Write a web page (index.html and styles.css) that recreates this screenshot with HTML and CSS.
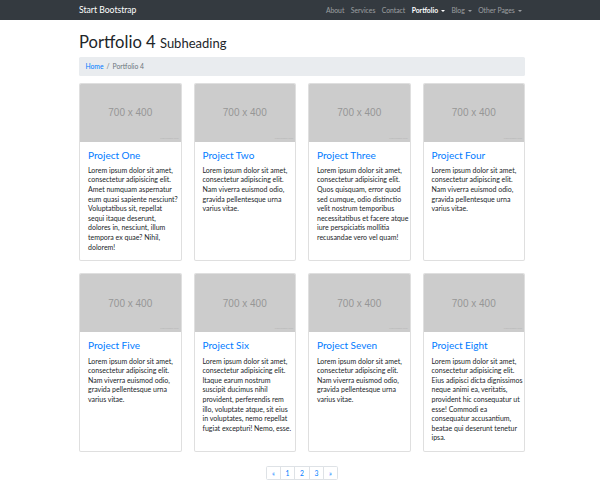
FILE: index.html
```html
<!DOCTYPE html>
<html lang="en">
<head>
<meta charset="utf-8">
<title>Portfolio 4 - Start Bootstrap</title>
<link rel="stylesheet" href="styles.css">
</head>
<body>
<nav class="navbar">
  <div class="container nav-inner">
    <a class="brand" href="#">Start Bootstrap</a>
    <ul class="nav-links">
      <li><a href="#">About</a></li>
      <li><a href="#">Services</a></li>
      <li><a href="#">Contact</a></li>
      <li><a class="active dropdown" href="#">Portfolio</a></li>
      <li><a class="dropdown" href="#">Blog</a></li>
      <li><a class="dropdown" href="#">Other Pages</a></li>
    </ul>
  </div>
</nav>

<main class="container">
  <h1 class="page-title">Portfolio 4 <small>Subheading</small></h1>
  <ol class="breadcrumb">
    <li><a href="#">Home</a></li>
    <li class="crumb-active">Portfolio 4</li>
  </ol>

  <div class="grid">
    <div class="card">
      <div class="ph"><span>700 x 400</span><i>placeholder.com</i></div>
      <div class="card-body">
        <h4 class="card-title"><a href="#">Project One</a></h4>
        <p>Lorem ipsum dolor sit amet,<br>consectetur adipisicing elit.<br>Amet numquam aspernatur<br>eum quasi sapiente nesciunt?<br>Voluptatibus sit, repellat<br>sequi itaque deserunt,<br>dolores in, nesciunt, illum<br>tempora ex quae? Nihil,<br>dolorem!</p>
      </div>
    </div>
    <div class="card">
      <div class="ph"><span>700 x 400</span><i>placeholder.com</i></div>
      <div class="card-body">
        <h4 class="card-title"><a href="#">Project Two</a></h4>
        <p>Lorem ipsum dolor sit amet,<br>consectetur adipiscing elit.<br>Nam viverra euismod odio,<br>gravida pellentesque urna<br>varius vitae.</p>
      </div>
    </div>
    <div class="card">
      <div class="ph"><span>700 x 400</span><i>placeholder.com</i></div>
      <div class="card-body">
        <h4 class="card-title"><a href="#">Project Three</a></h4>
        <p>Lorem ipsum dolor sit amet,<br>consectetur adipisicing elit.<br>Quos quisquam, error quod<br>sed cumque, odio distinctio<br>velit nostrum temporibus<br>necessitatibus et facere atque<br>iure perspiciatis mollitia<br>recusandae vero vel quam!</p>
      </div>
    </div>
    <div class="card">
      <div class="ph"><span>700 x 400</span><i>placeholder.com</i></div>
      <div class="card-body">
        <h4 class="card-title"><a href="#">Project Four</a></h4>
        <p>Lorem ipsum dolor sit amet,<br>consectetur adipiscing elit.<br>Nam viverra euismod odio,<br>gravida pellentesque urna<br>varius vitae.</p>
      </div>
    </div>
    <div class="card">
      <div class="ph"><span>700 x 400</span><i>placeholder.com</i></div>
      <div class="card-body">
        <h4 class="card-title"><a href="#">Project Five</a></h4>
        <p>Lorem ipsum dolor sit amet,<br>consectetur adipiscing elit.<br>Nam viverra euismod odio,<br>gravida pellentesque urna<br>varius vitae.</p>
      </div>
    </div>
    <div class="card">
      <div class="ph"><span>700 x 400</span><i>placeholder.com</i></div>
      <div class="card-body">
        <h4 class="card-title"><a href="#">Project Six</a></h4>
        <p>Lorem ipsum dolor sit amet,<br>consectetur adipisicing elit.<br>Itaque earum nostrum<br>suscipit ducimus nihil<br>provident, perferendis rem<br>illo, voluptate atque, sit eius<br>in voluptates, nemo repellat<br>fugiat excepturi! Nemo, esse.</p>
      </div>
    </div>
    <div class="card">
      <div class="ph"><span>700 x 400</span><i>placeholder.com</i></div>
      <div class="card-body">
        <h4 class="card-title"><a href="#">Project Seven</a></h4>
        <p>Lorem ipsum dolor sit amet,<br>consectetur adipiscing elit.<br>Nam viverra euismod odio,<br>gravida pellentesque urna<br>varius vitae.</p>
      </div>
    </div>
    <div class="card">
      <div class="ph"><span>700 x 400</span><i>placeholder.com</i></div>
      <div class="card-body">
        <h4 class="card-title"><a href="#">Project Eight</a></h4>
        <p>Lorem ipsum dolor sit amet,<br>consectetur adipisicing elit.<br>Eius adipisci dicta dignissimos<br>neque animi ea, veritatis,<br>provident hic consequatur ut<br>esse! Commodi ea<br>consequatur accusantium,<br>beatae qui deserunt tenetur<br>ipsa.</p>
      </div>
    </div>
  </div>

  <ul class="pagination">
    <li><a href="#">&laquo;</a></li>
    <li><a href="#">1</a></li>
    <li><a href="#">2</a></li>
    <li><a href="#">3</a></li>
    <li><a href="#">&raquo;</a></li>
  </ul>
</main>
</body>
</html>
```

FILE: styles.css
```css
* { box-sizing: border-box; }

body {
  margin: 0;
  background: #fff;
  color: #212529;
  font-family: Lato, "Open Sans", "Liberation Sans", sans-serif;
  font-size: 7px;
  line-height: 1.5;
}

a { text-decoration: none; }

.container {
  width: 450px;
  padding-left: 4px;
  margin: 0 auto;
}

/* navbar */
.navbar {
  background: #343a40;
  height: 20px;
}
.nav-inner {
  height: 100%;
  display: flex;
  align-items: center;
  justify-content: space-between;
}
.brand {
  color: #fff;
  font-size: 8.6px;
  line-height: 1;
}
.nav-links {
  list-style: none;
  margin: 0;
  padding: 0;
  display: flex;
}
.nav-links a {
  display: block;
  padding: 0 3.2px;
  color: rgba(255, 255, 255, 0.5);
  font-size: 6.8px;
}
.nav-links a.active {
  color: #fff;
  font-weight: 700;
}
.nav-links a.dropdown::after {
  content: "";
  display: inline-block;
  margin-left: 3px;
  vertical-align: 1px;
  border-top: 2px solid currentColor;
  border-left: 2px solid transparent;
  border-right: 2px solid transparent;
}

/* heading */
.page-title {
  font-size: 16.6px;
  font-weight: 400;
  line-height: 19px;
  margin: 13px 0 4px;
  color: #212529;
}
.page-title small {
  font-size: 13px;
}

.breadcrumb {
  list-style: none;
  display: flex;
  margin: 0 0 7px;
  padding: 4.5px 6.4px;
  background: #e9ecef;
  border-radius: 1.6px;
  font-size: 6.8px;
  line-height: 9.6px;
}
.breadcrumb a { color: #007bff; }
.crumb-active { color: #6c757d; }
.crumb-active::before {
  content: "/";
  padding: 0 3px;
  color: #6c757d;
}

/* cards */
.grid {
  display: grid;
  grid-template-columns: repeat(4, 1fr);
  gap: 12px 12px;
}
.card {
  border: 1px solid rgba(0, 0, 0, 0.125);
  border-radius: 2px;
  overflow: hidden;
  background: #fff;
}
.ph {
  position: relative;
  height: 58px;
  background: #cccccc;
  display: flex;
  align-items: center;
  justify-content: center;
}
.ph span {
  font-family: "Liberation Sans", Arial, sans-serif;
  font-size: 10px;
  color: #969696;
}
.ph i {
  position: absolute;
  right: 2px;
  bottom: 1px;
  font-style: normal;
  font-family: "Liberation Sans", Arial, sans-serif;
  font-size: 2.5px;
  color: #b0b0b0;
}
.card-body {
  padding: 8px;
}
.card-title {
  margin: 0 0 4.8px;
  font-size: 10px;
  font-weight: 400;
  line-height: 11.5px;
}
.card-title a { color: #007bff; }
.card-body p {
  margin: 0;
  white-space: nowrap;
  font-size: 7px;
  line-height: 9.6px;
}

/* pagination */
.pagination {
  list-style: none;
  display: flex;
  justify-content: center;
  margin: 14px 0 0;
  padding: 0;
  font-size: 6.8px;
}
.pagination a {
  display: block;
  min-width: 14px;
  height: 14px;
  padding: 0 4.8px;
  margin-left: -1px;
  border: 1px solid #dee2e6;
  color: #007bff;
  background: #fff;
  line-height: 12px;
  text-align: center;
}
.pagination li:first-child a {
  margin-left: 0;
  border-radius: 1.6px 0 0 1.6px;
}
.pagination li:last-child a {
  border-radius: 0 1.6px 1.6px 0;
}
```
